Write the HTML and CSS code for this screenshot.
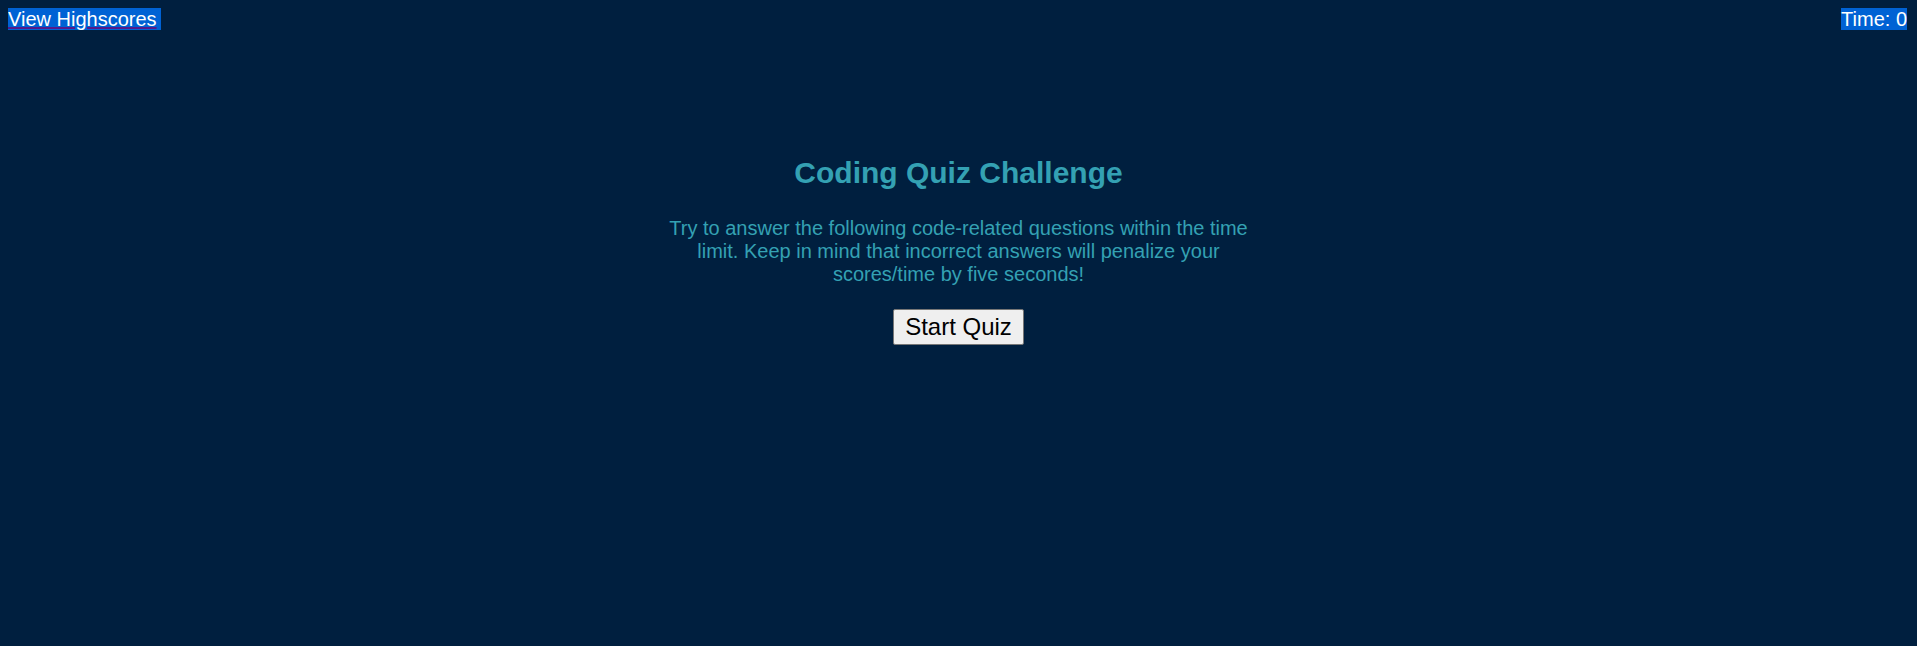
FILE: index.html
```html
<!DOCTYPE html>
<html lang="en">
<head>
<meta charset="utf-8">
<title>Coding Quiz Challenge</title>
<link rel="stylesheet" href="styles.css">
</head>
<body>
<header class="top-bar">
  <span class="chip chip-link"><a class="scores-link" href="#">View Highscores</a></span>
  <span class="chip">Time: 0</span>
</header>
<main class="intro">
  <h1 class="intro-title">Coding Quiz Challenge</h1>
  <p class="intro-text">Try to answer the following code-related questions within the time limit. Keep in mind that incorrect answers will penalize your scores/time by five seconds!</p>
  <button class="start-btn" type="button">Start Quiz</button>
</main>
</body>
</html>
```

FILE: styles.css
```css
html, body {
  background: #001f3f;
}

body {
  margin: 8px;
  font-family: "Liberation Sans", Arial, sans-serif;
}

.top-bar {
  display: flex;
  justify-content: space-between;
  align-items: flex-start;
  padding-right: 2px;
}

.chip {
  background: #0062d4;
  color: #ffffff;
  font-size: 20px;
  line-height: 22px;
}

.chip-link {
  padding-right: 4px;
}

.scores-link {
  color: #ffffff;
  text-decoration: underline;
  text-decoration-color: #551a8b;
}

.intro {
  max-width: 600px;
  margin: 0 auto;
  padding-top: 126px;
  display: flex;
  flex-direction: column;
  align-items: center;
  text-align: center;
  color: #34a1b3;
}

.intro-title {
  margin: 0;
  font-size: 30px;
  font-weight: bold;
}

.intro-text {
  margin: 27px 0 23px;
  font-size: 20px;
  line-height: 23px;
}

.start-btn {
  font-family: "Liberation Sans", Arial, sans-serif;
  font-size: 24px;
  color: #000000;
  background: #efefef;
  border: 1px solid #767676;
  border-radius: 2px;
  padding: 3px 11px;
}
```
